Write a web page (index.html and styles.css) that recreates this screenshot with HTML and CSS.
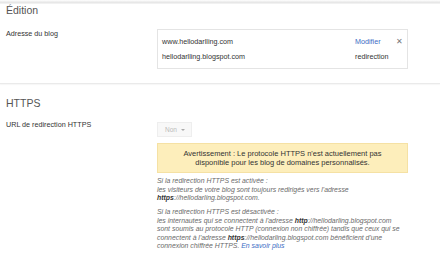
FILE: index.html
```html
<!DOCTYPE html>
<html lang="fr">
<head>
<meta charset="utf-8">
<link rel="stylesheet" href="styles.css">
</head>
<body>
<div class="topshadow"></div>
<section class="section">
  <h2 class="section-title">Édition</h2>
  <div class="row">
    <div class="label">Adresse du blog</div>
    <div class="field">
      <div class="addr-box">
        <div class="addr-row">
          <span class="addr">www.hellodarlling.com</span>
          <a class="modify">Modifier</a>
          <span class="close">✕</span>
        </div>
        <div class="addr-row">
          <span class="addr">hellodarlling.blogspot.com</span>
          <span class="redir">redirection</span>
          <span class="close-empty"></span>
        </div>
      </div>
    </div>
  </div>
</section>
<div class="separator"></div>
<section class="section">
  <h2 class="section-title https">HTTPS</h2>
  <div class="row row-https">
    <div class="label">URL de redirection HTTPS</div>
    <div class="field">
      <div class="select">Non <span class="caret"></span></div>
      <div class="warning">Avertissement : Le protocole HTTPS n'est actuellement pas<br>disponible pour les blog de domaines personnalisés.</div>
      <p class="help">Si la redirection HTTPS est activée :<br>les visiteurs de votre blog sont toujours redirigés vers l'adresse<br><b>https</b>://hellodarling.blogspot.com.</p>
      <p class="help">Si la redirection HTTPS est désactivée :<br>les internautes qui se connectent à l'adresse <b>http</b>://hellodarling.blogspot.com<br>sont soumis au protocole HTTP (connexion non chiffrée) tandis que ceux qui se<br>connectent à l'adresse <b>https</b>://hellodarling.blogspot.com bénéficient d'une<br>connexion chiffrée HTTPS. <a class="more">En savoir plus</a></p>
    </div>
  </div>
</section>
</body>
</html>
```
FILE: styles.css
```css
html, body {
  margin: 0;
  padding: 0;
  background: #fff;
}
body {
  font-family: "Liberation Sans", Arial, sans-serif;
  color: #333;
  width: 440px;
  height: 256px;
  overflow: hidden;
  position: relative;
}
.topshadow {
  position: absolute;
  left: 0;
  right: 0;
  top: 0;
  height: 4px;
  background: linear-gradient(#fff, #e6e6e6 60%, #f6f6f6);
}
.section {
  padding-left: 6px;
}
.section-title {
  margin: 0;
  font-weight: normal;
  font-size: 10.5px;
  line-height: 12px;
  color: #555;
  padding-top: 4px;
}
.row {
  display: grid;
  grid-template-columns: 151px 251px;
  margin-top: 13px;
}
.row-https {
  margin-top: 11px;
}
.label {
  font-size: 7.2px;
  line-height: 9px;
  color: #333;
}
.addr-box {
  border: 1px solid #e4e4e4;
  padding: 4px 0 4px 4px;
  font-size: 7.2px;
  color: #333;
}
.addr-row {
  display: grid;
  grid-template-columns: 193px 41px 1fr;
  align-items: center;
  height: 15px;
}
.modify {
  color: #3b6bc4;
}
.redir {
  color: #333;
}
.close {
  color: #777;
  font-size: 8px;
}
.separator {
  margin-top: 14px;
  height: 1px;
  background: #eaeaea;
  box-shadow: 0 1px 1px #f5f5f5;
}
.https {
  padding-top: 13px;
}
.select {
  display: inline-flex;
  align-items: center;
  gap: 4px;
  height: 13px;
  padding: 0 6px 0 7px;
  border: 1px solid #eeeeee;
  background: #f8f8f8;
  color: #bbb;
  font-size: 6.5px;
  margin-top: 2px;
  vertical-align: top;
}
.caret {
  width: 0;
  height: 0;
  border-left: 2px solid transparent;
  border-right: 2px solid transparent;
  border-top: 2px solid #aaa;
}
.warning {
  margin-top: 5px;
  background: #fdeebb;
  border: 1px solid #f5e1a4;
  text-align: center;
  font-size: 7.5px;
  line-height: 9px;
  padding: 5px 0 5px;
  color: #333;
}
.help {
  margin: 4px 0 0;
  font-size: 6.9px;
  line-height: 8.5px;
  font-style: italic;
  color: #6a6a6a;
  white-space: nowrap;
}
.help + .help {
  margin-top: 5.5px;
}
.help b {
  color: #333;
}
.more {
  color: #3b6bc4;
}
```
